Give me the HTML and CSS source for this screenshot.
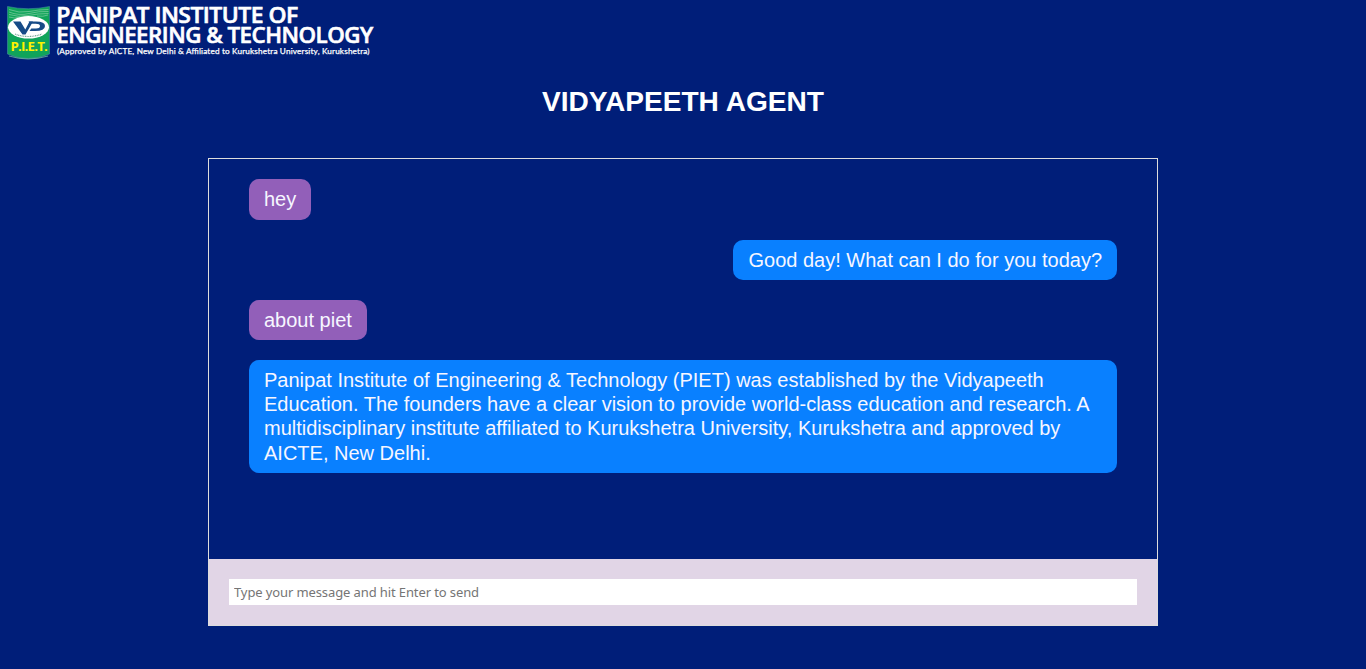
FILE: index.html
```html
<!DOCTYPE html>
<html lang="en">
<head>
<meta charset="utf-8">
<title>Vidyapeeth Agent</title>
<link rel="stylesheet" href="styles.css">
</head>
<body>
<header class="header">
  <svg class="logo" width="376" height="62" viewBox="0 0 376 62" role="img" aria-label="Panipat Institute of Engineering and Technology">
    <path d="M7.500 6.500Q28 11 49.500 6.500V54Q28 63 7.500 54Z" fill="#10a45a" stroke="#3f8ea0" stroke-width=".6"/>
    <g fill="none" stroke="#83cfa2" stroke-width=".7">
      <path d="M9 9.500q10 4 20 2t19.500-2M9 12q10 4 20 1.500t19.500-2M9 14.500q9 3 19 1t20.500-2M9 17q6 2 11 0M37 16q6 1 11-1"/>
      <path d="M9 56q19 6 39 0"/>
    </g>
    <ellipse cx="28.500" cy="27.300" rx="20.500" ry="11.200" fill="#fff"/>
    <path d="M13 21.500H20.500L25.300 29.500L29.500 21.500H33L25.500 34.500H22.500Z" fill="#174b87"/>
    <path d="M28.500 21.500H36Q45 21.500 45 26Q45 31 35 31H29.500L31.300 28.500H36Q40 28.500 40 26Q40 23.800 35.500 23.800H30Z" fill="#174b87"/>
    <path d="M15 34q13 5 27 0" fill="none" stroke="#74a494" stroke-width="1.200" stroke-dasharray="1 .7"/>
    <text class="logo-mark" x="10.500" y="51.300" textLength="36.500" lengthAdjust="spacingAndGlyphs">P.I.E.T.</text>
    <text class="logo-name" x="56.200" y="22.500" textLength="241.500" lengthAdjust="spacingAndGlyphs">PANIPAT INSTITUTE OF</text>
    <text class="logo-name" x="56.200" y="42.500" textLength="316.500" lengthAdjust="spacingAndGlyphs">ENGINEERING &amp; TECHNOLOGY</text>
    <text class="logo-note" x="57" y="54.300" textLength="312.500" lengthAdjust="spacing">(Approved by AICTE, New Delhi &amp; Affiliated to Kurukshetra University, Kurukshetra)</text>
  </svg>
</header>
<main class="main">
  <h1 class="title">VIDYAPEETH AGENT</h1>
  <section class="chat">
    <div class="messages">
      <div class="message user">hey</div>
      <div class="message agent">Good day! What can I do for you today?</div>
      <div class="message user">about piet</div>
      <div class="message agent">Panipat Institute of Engineering &amp; Technology (PIET) was established by the Vidyapeeth Education. The founders have a clear vision to provide world-class education and research. A multidisciplinary institute affiliated to Kurukshetra University, Kurukshetra and approved by AICTE, New Delhi.</div>
    </div>
    <form class="composer">
      <input class="field" type="text" placeholder="Type your message and hit Enter to send">
    </form>
  </section>
</main>
</body>
</html>
```
FILE: styles.css
```css
* {
  box-sizing: border-box;
}

body {
  margin: 0;
  background: #001e79;
  color: #fff;
  font-family: "Liberation Sans", Arial, sans-serif;
  overflow: hidden;
}

.header {
  height: 62px;
}

.logo {
  display: block;
  overflow: visible;
}

.logo-name {
  font: 600 22px "Open Sans", sans-serif;
  letter-spacing: -0.5px;
  fill: #fff;
  stroke: #fff;
  stroke-width: 0.6px;
}

.logo-note {
  font: 400 8.2px Lato, sans-serif;
  fill: #fff;
  stroke: #fff;
  stroke-width: 0.25px;
}

.logo-mark {
  font: 700 13px "Open Sans", sans-serif;
  letter-spacing: -0.8px;
  fill: #fff200;
}

.title {
  margin: 0;
  padding-top: 24px;
  height: 96px;
  font-size: 28.1px;
  line-height: 32px;
  text-align: center;
}

.chat {
  width: 950px;
  height: 468px;
  margin: 0 auto;
  border: 1px solid #ddd;
  display: flex;
  flex-direction: column;
}

.messages {
  height: 400px;
  padding: 20.4px 40px 0;
  display: flex;
  flex-direction: column;
  align-items: flex-start;
  gap: 20px;
}

.message {
  padding: 8px 15px;
  border-radius: 10px;
  font-size: 20px;
  line-height: 24.2px;
  color: #f6f6ff;
}

.user {
  background: #925fb9;
}

.agent {
  align-self: flex-end;
  background: #0980ff;
}

.composer {
  flex: 1;
  padding: 20px;
  background: #e1d5e6;
}

.field {
  display: block;
  width: 100%;
  height: 26px;
  padding: 5px;
  border: 0;
  border-radius: 0;
  background: #fff;
  font: 13px "Noto Sans", sans-serif;
  letter-spacing: -0.11px;
}

.field::placeholder {
  color: #757575;
}
```
